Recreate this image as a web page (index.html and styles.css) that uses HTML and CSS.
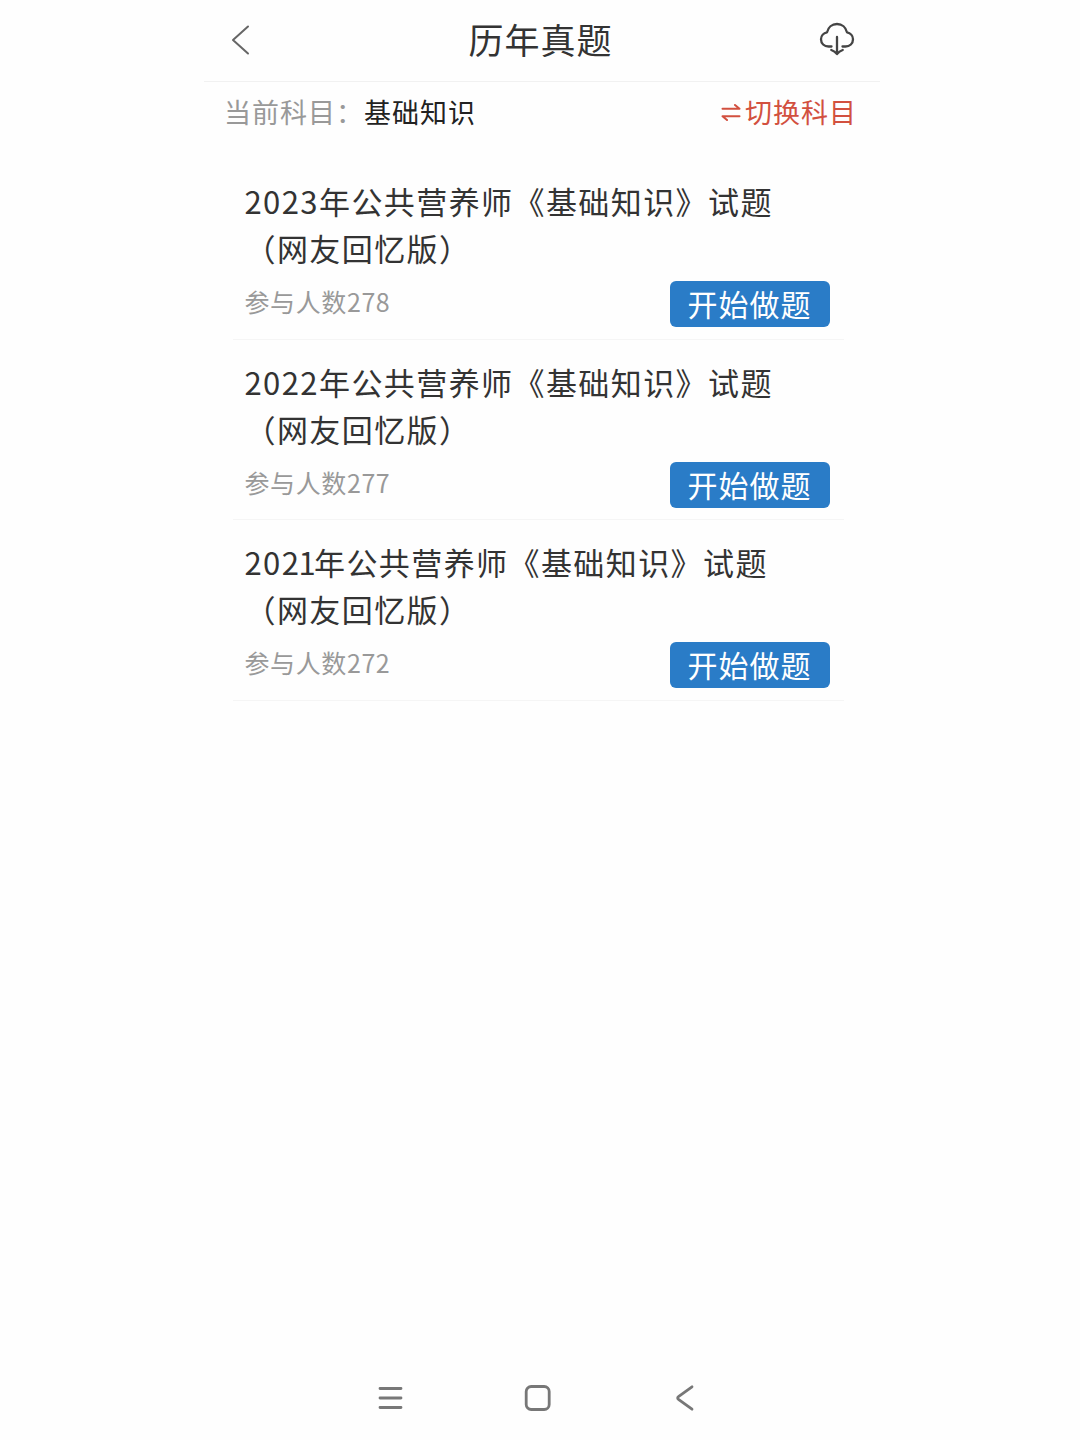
FILE: index.html
```
<!DOCTYPE html>
<html lang="zh-CN">

<head>
    <meta charset="UTF-8">
    <meta name="viewport" content="width=device-width, initial-scale=1.0">
    <title>历年真题</title>
    <link rel="stylesheet" href="styles.css">
</head>

<body>
    <div class="phone">
        <header class="header">
            <svg class="back" width="20" height="32" viewBox="0 0 20 32">
                <path d="M18 2.5 L3 16 L18 29.5" />
            </svg>
            <h1>历年真题</h1>
            <svg class="download" width="36" height="36" viewBox="0 0 36 36">
                <path d="M12.5 24.5 H9.5 C5.2 24.5 2 21.5 2 17.3 C2 13.7 4.6 11 8 10.4 C9 5.3 13 2 18 2 C23 2 27 5.3 28 10.4 C31.4 11 34 13.7 34 17.3 C34 21.5 30.8 24.5 26.5 24.5 H23.5" />
                <path d="M18 15 V32 M12.3 28 C14.5 28.8 16.5 30.2 18 32 C19.5 30.2 21.5 28.8 23.7 28" />
            </svg>
        </header>

        <div class="subject">
            <span class="label">当前科目：</span>
            <span class="name">基础知识</span>
            <a class="switch">
                <svg width="20" height="18" viewBox="0 0 20 18">
                    <path d="M1.5 5.8 H18.5 L14 2 M18.5 13.2 H1.5 L6 17" />
                </svg>
                <span>切换科目</span>
            </a>
        </div>

        <main class="list">
            <div class="item">
                <h2>2023年公共营养师《基础知识》试题<br>（网友回忆版）</h2>
                <div class="bottom">
                    <span class="count">参与人数278</span>
                    <button class="start">开始做题</button>
                </div>
            </div>
            <div class="item">
                <h2>2022年公共营养师《基础知识》试题<br>（网友回忆版）</h2>
                <div class="bottom">
                    <span class="count">参与人数277</span>
                    <button class="start">开始做题</button>
                </div>
            </div>
            <div class="item">
                <h2>202<span class="one">1</span>年公共营养师《基础知识》试题<br>（网友回忆版）</h2>
                <div class="bottom">
                    <span class="count">参与人数272</span>
                    <button class="start">开始做题</button>
                </div>
            </div>
        </main>

        <nav class="navbar">
            <svg width="28" height="28" viewBox="0 0 28 28">
                <path d="M3 4.5 H24 M3 14 H24 M3 23.5 H24" />
            </svg>
            <svg width="28" height="28" viewBox="0 0 28 28">
                <rect x="2.2" y="2.5" width="23" height="23" rx="5" />
            </svg>
            <svg width="28" height="28" viewBox="0 0 28 28">
                <path d="M21 2.8 L7.8 12.3 Q5.5 14 7.8 15.7 L21 25.2" />
            </svg>
        </nav>
    </div>
</body>

</html>
```
FILE: styles.css
```
* {
    box-sizing: border-box;
}

body {
    margin: 0;
    background: #fefefe;
    font-family: "Noto Sans CJK SC", sans-serif;
    color: #333;
}

svg {
    display: block;
    fill: none;
    stroke-linecap: round;
    stroke-linejoin: round;
}

.phone {
    display: flex;
    flex-direction: column;
    width: 676px;
    height: 1440px;
    margin-left: 204px;
}

.header {
    display: grid;
    grid-template-columns: 60px 1fr 60px;
    align-items: center;
    height: 82px;
    padding: 0 3px 2px 0;
    border-bottom: 1px solid #f1f1f1;
}

.header h1 {
    margin: 0;
    padding-bottom: 2px;
    font-size: 35px;
    font-weight: 400;
    line-height: 50px;
    letter-spacing: 1px;
    text-align: center;
}

.back {
    margin-left: 26px;
    stroke: #666;
    stroke-width: 2;
}

.download {
    margin-left: 2px;
    stroke: #444;
    stroke-width: 2.3;
}

.subject {
    display: flex;
    align-items: center;
    height: 60px;
    padding: 0 23px 0 20px;
    font-size: 27px;
    line-height: 40px;
    letter-spacing: 1px;
}

.label {
    color: #999;
}

.name {
    color: #222;
}

.switch {
    display: flex;
    align-items: center;
    gap: 4px;
    margin-left: auto;
    color: #d2503f;
}

.switch svg {
    stroke: #d2503f;
    stroke-width: 2;
}

.list {
    flex: 1;
    padding: 17px 36px 0 29px;
}

.item {
    height: 180.6px;
    padding: 18px 14.5px 0 11.5px;
    border-bottom: 1px solid #f5f5f5;
}

.item h2 {
    margin: 0;
    font-size: 31px;
    font-weight: 400;
    line-height: 47px;
    letter-spacing: 1.42px;
    white-space: nowrap;
}

.one {
    margin-left: -2px;
    letter-spacing: -1.6px;
}

.bottom {
    display: flex;
    justify-content: space-between;
    margin-top: 10px;
}

.count {
    font-size: 25px;
    line-height: 40px;
    letter-spacing: 0.6px;
    color: #999;
}

.start {
    width: 160px;
    height: 46px;
    padding: 0 0 2px;
    border: none;
    border-radius: 6px;
    background: #2a7cc7;
    color: #fff;
    font-family: inherit;
    font-size: 30px;
    line-height: 44px;
    letter-spacing: 1px;
}

.navbar {
    display: flex;
    justify-content: center;
    gap: 119px;
    height: 56px;
    padding-right: 9px;
}

.navbar svg {
    stroke: #777;
    stroke-width: 2.8;
}
```
